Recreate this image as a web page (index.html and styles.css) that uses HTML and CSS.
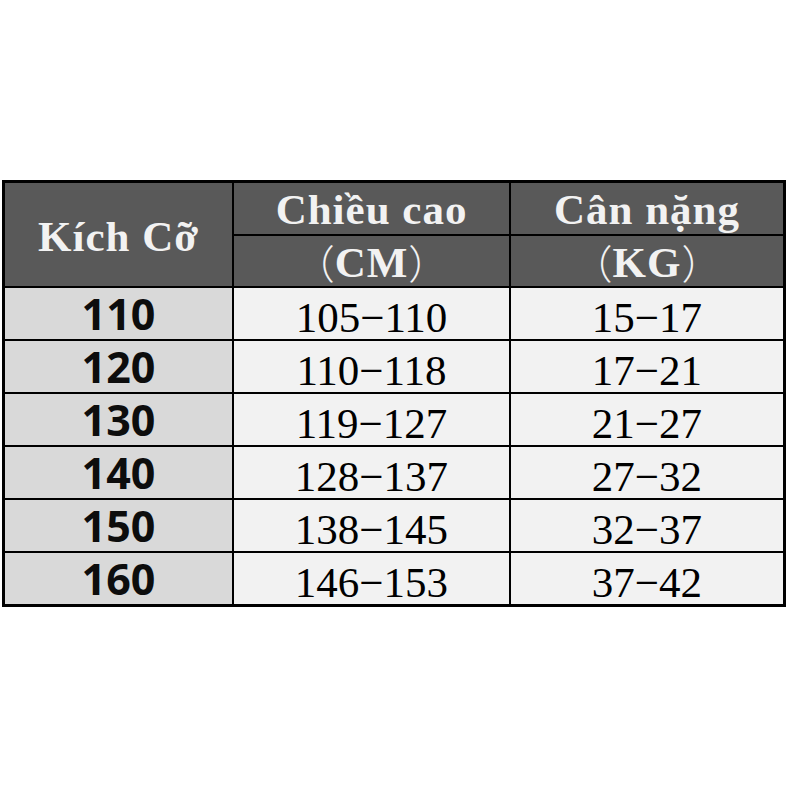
FILE: index.html
```html
<!DOCTYPE html>
<html lang="vi">
<head>
<meta charset="utf-8">
<title>Bảng kích cỡ</title>
<link rel="stylesheet" href="styles.css">
</head>
<body>
<div class="size-table">
  <div class="cell head head-size">Kích Cỡ</div>
  <div class="cell head head-top">Chiều cao</div>
  <div class="cell head head-top">Cân nặng</div>
  <div class="cell head head-unit"><span class="paren">（</span>CM<span class="paren">）</span></div>
  <div class="cell head head-unit"><span class="paren">（</span>KG<span class="paren">）</span></div>

  <div class="cell size">110</div><div class="cell val">105−110</div><div class="cell val">15−17</div>
  <div class="cell size">120</div><div class="cell val">110−118</div><div class="cell val">17−21</div>
  <div class="cell size">130</div><div class="cell val">119−127</div><div class="cell val">21−27</div>
  <div class="cell size">140</div><div class="cell val">128−137</div><div class="cell val">27−32</div>
  <div class="cell size">150</div><div class="cell val">138−145</div><div class="cell val">32−37</div>
  <div class="cell size">160</div><div class="cell val">146−153</div><div class="cell val">37−42</div>
</div>
</body>
</html>
```
FILE: styles.css
```css
html, body {
  margin: 0;
  padding: 0;
  background: #ffffff;
}

body {
  padding-top: 180px;
  padding-left: 2px;
}

.size-table {
  display: grid;
  width: 784px;
  box-sizing: border-box;
  grid-template-columns: 227px 275px 272px;
  grid-template-rows: 51px 50px repeat(6, 51px);
  gap: 2px;
  padding: 3px;
  background: #000000;
}

.cell {
  display: flex;
  align-items: center;
  justify-content: center;
  line-height: 1;
  white-space: nowrap;
}

.head {
  background: #595959;
  color: #f2f2f2;
  font-family: "Liberation Serif", "Noto Sans CJK SC", serif;
  font-weight: 700;
  font-size: 43px;
  letter-spacing: 1px;
}

.head-size {
  grid-row: 1 / span 2;
  padding-top: 4px;
}

.head-top {
  padding-top: 2px;
}

.head-unit {
  padding-top: 2px;
}

.paren {
  font-family: "Noto Sans CJK SC", sans-serif;
  font-weight: 300;
  font-size: 40px;
  letter-spacing: 0;
}

.size {
  background: #d9d9d9;
  color: #0d0d0d;
  font-family: "Open Sans", "Liberation Sans", sans-serif;
  font-weight: 700;
  font-size: 43px;
}

.val {
  background: #f2f2f2;
  color: #000000;
  font-family: "Liberation Serif", serif;
  font-size: 43px;
  padding-top: 8px;
}
```
